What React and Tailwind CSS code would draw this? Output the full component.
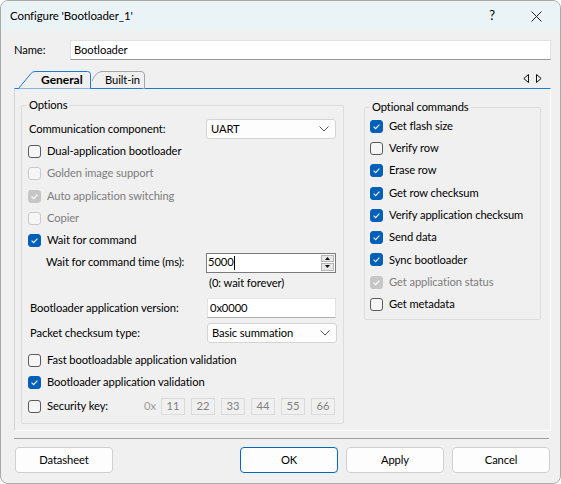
import React from "react";

function Box({ on, disabled }) {
  const cls = on
    ? disabled
      ? "bg-[#c6c6c6] border-[#c6c6c6]"
      : "bg-[#005fb8] border-[#005fb8]"
    : disabled
    ? "bg-[#f6f6f6] border-[#cbcbcb]"
    : "bg-[#f6f6f6] border-[#5a5a5a]";
  return (
    <span className={`w-[13px] h-[13px] rounded-[3px] border flex items-center justify-center shrink-0 ${cls}`}>
      {on && (
        <svg width="9" height="9" viewBox="0 0 9 9">
          <path d="M1.6 4.7 L3.6 6.6 L7.4 2.6" fill="none" stroke="white" strokeWidth="1.1" />
        </svg>
      )}
    </span>
  );
}

function CheckRow({ label, on, disabled, className = "" }) {
  return (
    <div className={`flex items-center gap-[6px] ${className}`}>
      <Box on={on} disabled={disabled} />
      <span className={disabled ? "text-[#7d7d7d]" : "text-black"}>{label}</span>
    </div>
  );
}

function Select({ value }) {
  return (
    <div className="h-[20px] w-[130px] bg-[#fdfdfd] border border-[#d4d4d4] rounded-[3px] flex items-center justify-between pl-[4px] pr-[6px]">
      <span>{value}</span>
      <svg width="10" height="6" viewBox="0 0 10 6">
        <path d="M0.5 0.5 L5 5 L9.5 0.5" fill="none" stroke="#555" strokeWidth="1" />
      </svg>
    </div>
  );
}

function GroupBox({ title, className = "", children }) {
  return (
    <div className={`relative border border-[#dcdcdc] rounded-[2px] ${className}`}>
      <span className="absolute -top-[9px] left-[5px] px-[2px] bg-[#f0f0f0] leading-[16px]">{title}</span>
      {children}
    </div>
  );
}

function Button({ children, primary }) {
  return (
    <button
      className={`w-[98px] h-[26px] rounded-[4px] bg-[#fdfdfd] border flex items-center justify-center ${
        primary ? "border-[#0067c0]" : "border-[#d0d0d0]"
      }`}
    >
      {children}
    </button>
  );
}

const commands = [
  ["Get flash size", true],
  ["Verify row", false],
  ["Erase row", true],
  ["Get row checksum", true],
  ["Verify application checksum", true],
  ["Send data", true],
  ["Sync bootloader", true],
  ["Get application status", true, true],
  ["Get metadata", false],
];

export default function App() {
  return (
    <div className="w-[561px] h-[484px] bg-[#f0f0f0] border border-[#a9a9a9] rounded-[8px] overflow-hidden flex flex-col text-[11.2px] tracking-[-0.1px] text-black font-[Lato,sans-serif]">
      {/* title bar */}
      <div className="h-[30px] bg-[#eaf4f6] flex items-center pl-[9px] pr-[18px] shrink-0">
        <span className="flex-1 text-[11.5px]">Configure 'Bootloader_1'</span>
        <span className="mr-[36px] text-[13px]">?</span>
        <svg width="11" height="11" viewBox="0 0 11 11">
          <path d="M0.5 0.5 L10.5 10.5 M10.5 0.5 L0.5 10.5" stroke="#222" strokeWidth="1" />
        </svg>
      </div>

      <div className="pl-[13px] pr-[9px] flex flex-col">
        {/* name row */}
        <div className="mt-[9px] h-[20px] flex items-center">
          <span className="w-[56px]">Name:</span>
          <div className="flex-1 h-[20px] bg-white border border-[#e0e0e0] border-b-[#9a9a9a] flex items-center pl-[3px]">
            Bootloader
          </div>
        </div>

        {/* tab strip */}
        <div className="mt-[9px] h-[19px] flex items-end relative">
          <div className="relative w-[78px] h-[19px] z-10">
            <svg className="absolute inset-0" width="78" height="20" viewBox="0 0 78 20">
              <path d="M4.5 19.5 L16.5 5 Q18.5 2.5 21 2.5 L73.5 2.5 Q76.5 2.5 76.5 5.5 L76.5 19.5" fill="#f0f0f0" stroke="#1a7bd6" strokeWidth="1" />
            </svg>
            <span className="absolute left-[27px] top-[3px] font-bold text-[12px] tracking-[0px] leading-[16px]">General</span>
          </div>
          <div className="relative w-[53px] h-[19px]">
            <svg className="absolute inset-0" width="53" height="20" viewBox="0 0 53 20">
              <path d="M0 12 Q4 2.5 10 2.5 L49 2.5 Q52.5 2.5 52.5 6 L52.5 19.5" fill="#f0f0f0" stroke="#a5a5a5" strokeWidth="1" />
            </svg>
            <span className="absolute left-[13px] top-[3px] leading-[16px]">Built-in</span>
          </div>
          <div className="flex-1" />
          <div className="flex items-center gap-[7px] mb-[5px] mr-[9px]">
            <svg width="6" height="9" viewBox="0 0 6 9">
              <path d="M5.5 0.5 L5.5 8.5 L0.8 4.5 Z" fill="none" stroke="#111" strokeWidth="1" />
            </svg>
            <svg width="6" height="9" viewBox="0 0 6 9">
              <path d="M0.5 0.5 L0.5 8.5 L5.2 4.5 Z" fill="none" stroke="#111" strokeWidth="1" />
            </svg>
          </div>
        </div>

        {/* tab page */}
        <div className="h-[343px] border-t border-t-[#1a7bd6] border-l border-l-[#d4d4d4] border-r border-r-white border-b border-b-white flex items-start pl-[6px] pt-[16px]">
          <GroupBox title="Options" className="w-[323px] h-[319px] pt-[13px]">
            <div className="flex items-center h-[20px]">
              <span className="ml-[7px] w-[177px]">Communication component:</span>
              <Select value="UART" />
            </div>
            <CheckRow className="mt-[1px] ml-[6px] h-[22px]" label="Dual-application bootloader" />
            <CheckRow className="ml-[6px] h-[23px]" label="Golden image support" disabled />
            <CheckRow className="ml-[6px] h-[23px]" label="Auto application switching" on disabled />
            <CheckRow className="ml-[6px] h-[21px]" label="Copier" disabled />
            <CheckRow className="ml-[6px] h-[23px]" label="Wait for command" on />
            <div className="flex items-center h-[21px]">
              <span className="ml-[24px] w-[160px]">Wait for command time (ms):</span>
              <div className="w-[130px] h-[20px] bg-white border border-[#7a7a7a] flex items-center pl-[1px] pr-[1px]">
                <span>5000</span>
                <span className="w-[1px] h-[14px] bg-black" />
                <div className="flex-1" />
                <div className="flex flex-col w-[13px] h-[16px] gap-[1px]">
                  <div className="flex-1 bg-[#e8e8e8] border border-[#b5b5b5] flex items-center justify-center">
                    <svg width="5" height="3" viewBox="0 0 5 3"><path d="M0 3 L2.5 0 L5 3 Z" fill="#111" /></svg>
                  </div>
                  <div className="flex-1 bg-[#e8e8e8] border border-[#b5b5b5] flex items-center justify-center">
                    <svg width="5" height="3" viewBox="0 0 5 3"><path d="M0 0 L2.5 3 L5 0 Z" fill="#111" /></svg>
                  </div>
                </div>
              </div>
            </div>
            <div className="h-[20px] flex items-center">
              <span className="ml-[187px]">(0: wait forever)</span>
            </div>
            <div className="mt-[4px] h-[22px] flex items-center">
              <span className="ml-[8px] w-[177px]">Bootloader application version:</span>
              <div className="w-[129px] h-[20px] bg-white border border-[#e3e3e3] border-b-[#b0b0b0] flex items-center pl-[2px]">
                0x0000
              </div>
            </div>
            <div className="mt-[3px] h-[22px] flex items-center">
              <span className="ml-[8px] w-[177px]">Packet checksum type:</span>
              <Select value="Basic summation" />
            </div>
            <CheckRow className="mt-[5px] ml-[6px] h-[22px]" label="Fast bootloadable application validation" />
            <CheckRow className="ml-[6px] h-[22px]" label="Bootloader application validation" on />
            <div className="mt-[1px] ml-[6px] h-[24px] flex items-center">
              <Box />
              <span className="ml-[6px] w-[97px]">Security key:</span>
              <span className="w-[17px] text-[#9a9a9a]">0x</span>
              <div className="flex gap-[6px]">
                {["11", "22", "33", "44", "55", "66"].map((k) => (
                  <div key={k} className="w-[24px] h-[17px] border border-[#dadada] text-[#808080] flex items-center justify-center">
                    {k}
                  </div>
                ))}
              </div>
            </div>
          </GroupBox>

          <GroupBox title="Optional commands" className="ml-[20px] mt-[2px] w-[177px] h-[213px] pt-[7px]">
            {commands.map(([label, on, disabled]) => (
              <CheckRow key={label} className="ml-[5px] h-[22.3px]" label={label} on={on} disabled={disabled} />
            ))}
          </GroupBox>
        </div>

        {/* separator */}
        <div className="mt-[7px] h-[1px] bg-[#a0a0a0] mr-[2px]" />

        {/* buttons */}
        <div className="mt-[8px] flex items-center">
          <div className="ml-[1px]">
            <Button>Datasheet</Button>
          </div>
          <div className="flex-1" />
          <div className="flex gap-[8px] mr-[1px]">
            <Button primary>OK</Button>
            <Button>Apply</Button>
            <Button>Cancel</Button>
          </div>
        </div>
      </div>
    </div>
  );
}
